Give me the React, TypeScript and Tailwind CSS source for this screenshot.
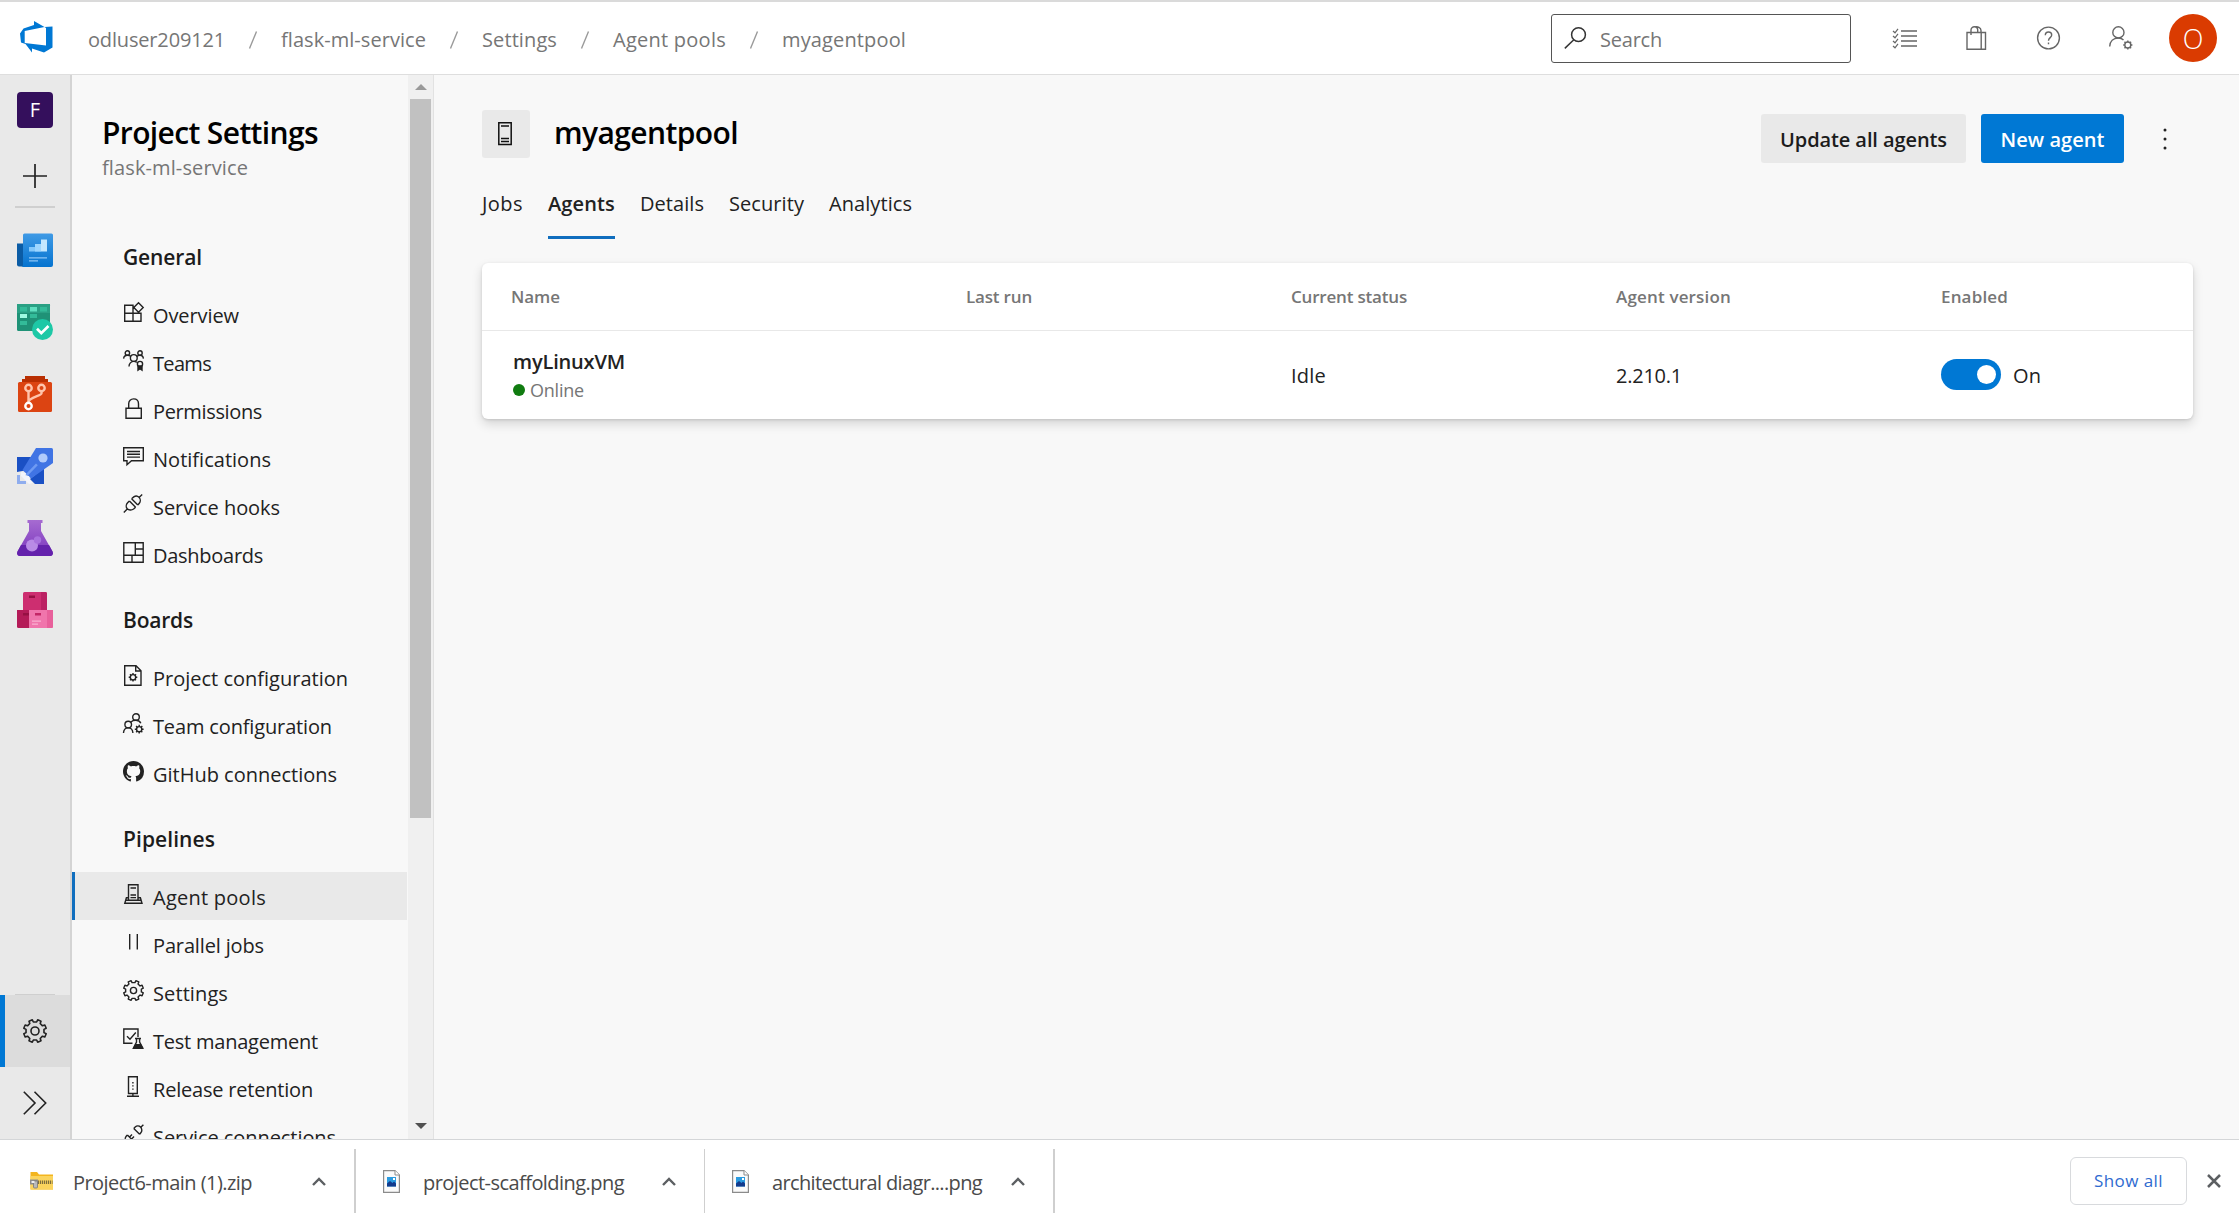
import { ReactNode, useLayoutEffect, useRef } from "react";

/* Text whose tracking is adjusted so that the run takes a given width. */
function Fit({ w, className = "", children }: { w: number; className?: string; children: string }) {
  const ref = useRef<HTMLSpanElement>(null);
  useLayoutEffect(() => {
    const el = ref.current!;
    el.style.letterSpacing = "0px";
    const natural = el.getBoundingClientRect().width;
    el.style.letterSpacing = `${(w - natural) / children.length}px`;
  }, [w, children]);
  return (
    <span ref={ref} className={`inline-block w-max shrink-0 whitespace-pre ${className}`}>
      {children}
    </span>
  );
}

function gearPath(c: number, teeth: number, r1: number, r2: number) {
  const pts: string[] = [];
  for (let i = 0; i < teeth; i++) {
    const step = (Math.PI * 2) / teeth;
    const a = i * step - step / 2;
    [
      [a - step * 0.27, r1],
      [a - step * 0.2, r2],
      [a + step * 0.2, r2],
      [a + step * 0.27, r1],
    ].forEach(([t, r]) => pts.push(`${(c + r * Math.cos(t)).toFixed(2)} ${(c + r * Math.sin(t)).toFixed(2)}`));
  }
  return `M${pts.join("L")}Z`;
}

function Ico({ s = 21, sw = 1.4, className = "", children }: { s?: number; sw?: number; className?: string; children: ReactNode }) {
  return (
    <svg
      width={s}
      height={s}
      viewBox={`0 0 ${s} ${s}`}
      fill="none"
      stroke="currentColor"
      strokeWidth={sw}
      className={`block shrink-0 overflow-visible ${className}`}
    >
      {children}
    </svg>
  );
}

const Gear = ({ s, sw = 1.4, r }: { s: number; sw?: number; r: number }) => (
  <Ico s={s} sw={sw}>
    <path d={gearPath(s / 2, 8, s * 0.38, s * 0.48)} strokeLinejoin="round" />
    <circle cx={s / 2} cy={s / 2} r={r} />
  </Ico>
);

const icons: Record<string, ReactNode> = {
  overview: (
    <Ico>
      <path d="M1.7 3.2H10V19.3H1.7ZM1.7 11.3H18V19.3H1.7M10 11.3V19.3M15.5 .8L20.2 5.5L15.5 10.2L10.8 5.5Z" />
    </Ico>
  ),
  teams: (
    <Ico>
      <circle cx="4.4" cy="3" r="2.2" />
      <circle cx="17" cy="3" r="2.2" />
      <circle cx="10.8" cy="8" r="3.4" />
      <path d="M.6 8.6C.8 6.4 2.4 5.2 4.4 5.2S7.4 6 8 6.6M20.4 8.6C20.2 6.4 19 5.2 17 5.2S14.2 6 13.6 6.6M6 16.5C6 13.6 8 11.4 10.8 11.4C12 11.4 13 11.8 13.8 12.4" />
      <circle cx="17" cy="14" r="2.6" />
      <path d="M15 16V20.2L17 18.8L19 20.2V16Z" fill="currentColor" />
    </Ico>
  ),
  lock: (
    <Ico>
      <path d="M3 10.3H18.3V20.3H3ZM5.7 10.3V5.8C5.7 2.8 7.8.9 10.6.9S15.5 2.8 15.5 5.8V10.3" />
    </Ico>
  ),
  note: (
    <Ico>
      <path d="M.7 1.7H20.3V14.8H8.5L4 18.8V14.8H.7ZM4 5.5H17M4 8.3H17M4 11.1H17" />
    </Ico>
  ),
  hook: (
    <Ico sw={1.4}>
      <path d="M.8 18.5L4 15.3M15.8 3.7L19.2 .6M8.6 4.8L14.8 11M6.4 7L12.6 13.200M8.600 4.800L10.800 2.900C12.600 1.500 14.700 1.900 16 3.200S17.900 7.200 16.300 9.300L14.800 11M6.400 7L4.600 8.800C3 10.500 2.800 13.200 4.200 14.700S8.600 16.500 10.600 15L12.600 13.200" />
    </Ico>
  ),
  dash: (
    <Ico>
      <path d="M.8 .8H20.2V20.2H.8ZM.8 13.3H20.2M12.3 .8V13.3M12.3 7H20.2M9 13.3V20.2" />
    </Ico>
  ),
  projcfg: (
    <Ico>
      <path d="M1.7 .7H13L18 5.7V20.3H1.7ZM12.7 .7V6H18" />
      <circle cx="10" cy="12.3" r="2.7" />
      <path d="M10 8V9.6M10 15V16.6M5.7 12.3H7.3M12.7 12.3H14.3M7 9.3L8.1 10.4M11.9 14.2L13 15.3M13 9.3L11.9 10.4M8.1 14.2L7 15.3" />
    </Ico>
  ),
  teamcfg: (
    <Ico>
      <circle cx="13" cy="4" r="3.3" />
      <circle cx="5.2" cy="11.6" r="3.3" />
      <path d="M.5 20C.7 16.8 2.6 14.9 5.2 14.9S9.7 16.8 9.9 20M8 8.9C9.2 7.8 11 7.2 13 7.3C15.5 7.4 17.2 8.7 17.8 10.3" />
      <circle cx="16.2" cy="16.2" r="2.6" />
      <path d="M16.2 11.8V13.6M16.2 18.8V20.6M11.8 16.2H13.6M18.8 16.2H20.6M13.1 13.1L14.3 14.3M18.1 18.1L19.3 19.3M19.3 13.1L18.1 14.3M14.3 18.1L13.1 19.3" />
    </Ico>
  ),
  github: (
    <svg width="21" height="21" viewBox="0 0 16 16" fill="currentColor" className="block shrink-0">
      <path d="M8 0C3.58 0 0 3.58 0 8c0 3.54 2.29 6.53 5.47 7.59.4.07.55-.17.55-.38 0-.19-.01-.82-.01-1.49-2.01.37-2.53-.49-2.69-.94-.09-.23-.48-.94-.82-1.13-.28-.15-.68-.52-.01-.53.63-.01 1.08.58 1.23.82.72 1.21 1.87.87 2.33.66.07-.52.28-.87.51-1.07-1.78-.2-3.64-.89-3.64-3.95 0-.87.31-1.59.82-2.15-.08-.2-.36-1.02.08-2.12 0 0 .67-.21 2.2.82.64-.18 1.32-.27 2-.27s1.36.09 2 .27c1.53-1.04 2.2-.82 2.2-.82.44 1.1.16 1.92.08 2.12.51.56.82 1.27.82 2.15 0 3.07-1.87 3.75-3.65 3.95.29.25.54.73.54 1.48 0 1.07-.01 1.93-.01 2.2 0 .21.15.46.55.38A8.01 8.01 0 0 0 16 8c0-4.42-3.58-8-8-8Z" />
    </svg>
  ),
  pool: (
    <Ico>
      <path d="M5.5 15.6V.8H15V15.6M5.5 13.8H3.4L1.8 19.3H19L17.4 13.8H15M3 16.2H17.6M7.5 4H13M7.5 11H13M7.5 13.6H13" />
    </Ico>
  ),
  parallel: (
    <Ico>
      <path d="M6.7 2V17.5M14.3 2V17.5" />
    </Ico>
  ),
  gear: <Gear s={21} r={3.1} />,
  test: (
    <Ico>
      <path d="M9.5 15.3H.8V1H15V9M4 8.2L7 11.3L12.8 4.5M12 10.5H18M13.5 10.5V14L10.5 20H19.8L16.6 14V10.5" />
      <path d="M12.6 16.6H17.6L19.4 20.2H10.6Z" fill="currentColor" />
    </Ico>
  ),
  release: (
    <Ico>
      <path d="M5.5 .8H14.3V17.5H5.5ZM9.9 17.5V20.2M4 20.3H16" />
      <path d="M9.9 6V14.5" strokeDasharray="1.4 1.8" />
    </Ico>
  ),
  plug: (
    <Ico>
      <path d="M20.4 .7L17.8 3.3M10.8 4.4L16.6 10.2M10.8 4.4L12.2 3C13.8 1.6 16.2 1.8 17.5 3.1S19.4 7 18 8.5L16.6 10.2M.8 20.2L3.4 17.6M4.4 11L10.2 16.8M4.4 11L3.2 12.3C1.8 14 2 16.4 3.4 17.7M6.6 13L9 10.6M8.6 15L11 12.6" />
    </Ico>
  ),
};

type Row = [icon: string, label: string, width: number];
const groups: { title: string; w: number; rows: Row[] }[] = [
  {
    title: "General",
    w: 79,
    rows: [
      ["overview", "Overview", 86],
      ["teams", "Teams", 58],
      ["lock", "Permissions", 109],
      ["note", "Notifications", 118],
      ["hook", "Service hooks", 127],
      ["dash", "Dashboards", 110],
    ],
  },
  {
    title: "Boards",
    w: 70,
    rows: [
      ["projcfg", "Project configuration", 195],
      ["teamcfg", "Team configuration", 179],
      ["github", "GitHub connections", 184],
    ],
  },
  {
    title: "Pipelines",
    w: 92,
    rows: [
      ["pool", "Agent pools", 113],
      ["parallel", "Parallel jobs", 111],
      ["gear", "Settings", 75],
      ["test", "Test management", 165],
      ["release", "Release retention", 160],
      ["plug", "Service connections", 183],
    ],
  },
];

const crumbs: [string, number][] = [
  ["odluser209121", 137],
  ["flask-ml-service", 145],
  ["Settings", 75],
  ["Agent pools", 113],
  ["myagentpool", 124],
];

function Header() {
  return (
    <header className="flex h-[75px] shrink-0 items-center border-t-2 border-b border-t-[#dadada] border-b-[#dedede] bg-white pr-[22px] pl-[19px]">
      <svg width="36" height="36" viewBox="0 0 36 36" className="mb-px block shrink-0" fill="#0078d4">
        <path fillRule="evenodd" d="M1 13.5L4.5 8.5L15 5V1L25.5 7L33.5 6.5V27.5L25 32.5L13 28.5V32.5L6.5 24L2 22.5ZM25.5 7L5.7 11V23L27 25.5V8Z" />
      </svg>
      <nav className="ml-[33px] flex items-center pt-[3px] text-[20px] leading-[30px] text-[#767676]">
        {crumbs.map(([label, w], i) => (
          <div key={label} className="flex items-center">
            {i > 0 && (
              <svg width="56" height="20" viewBox="0 0 56 20" stroke="#9a9a9a" strokeWidth="1.4" className="block">
                <path d="M24.5 18.500L31.500 1.500" />
              </svg>
            )}
            <Fit w={w}>{label}</Fit>
          </div>
        ))}
      </nav>
      <div className="ml-auto flex items-center text-[#666]">
        <div className="flex h-[49px] w-[300px] items-center rounded-[3px] border border-[#555] pl-[12px]">
          <Ico s={22} sw={1.5} className="text-[#333]">
            <circle cx="14.5" cy="7.7" r="6.9" />
            <path d="M9.8 12.8L.8 21.4" />
          </Ico>
          <Fit w={62} className="ml-[14px] pt-[3px] text-[20px] leading-[30px] text-[#767676]">
            Search
          </Fit>
        </div>
        <div className="ml-[42px] flex gap-[48px]">
          <Ico s={24} sw={1.5}>
            <path d="M8 5H24M8 10H24M8 15H24M8 20H24" />
            <path d="M0 5L2 6.8L5 2.8M0 10L2 11.8L5 7.8M0 15L2 16.8L5 12.8M0 20L2 21.8L5 17.8" strokeWidth="1.2" />
          </Ico>
          <Ico s={24} sw={1.4}>
            <path d="M2 6.500H20.500V23.3H2ZM16.200 6.500V23.3M6 9V4C6 2 7.500.8 9.400.8S12.700 2 12.700 4V6.500M10 1C12.500 .2 16 1.4 16 4.4V6.500" />
          </Ico>
          <Ico s={24} sw={1.4}>
            <circle cx="11.500" cy="12" r="10.900" />
            <path d="M8.300 9.300C8.300 7.200 9.700 6 11.500 6S14.700 7.200 14.700 9C14.700 11.500 11.500 11.800 11.500 14.700M11.500 16.500V18.300" />
          </Ico>
          <Ico s={24} sw={1.4}>
            <circle cx="9.4" cy="6.4" r="5.6" />
            <path d="M.7 20.5C.9 15.3 4.3 12 9.4 12C11.8 12 13.3 12.8 14.5 14" />
            <circle cx="18.8" cy="19" r="3" />
            <path d="M18.8 14.4V16M18.8 22V23.6M14.2 19H15.8M21.8 19H23.4M15.5 15.7L16.7 16.9M20.9 21.1L22.1 22.3M22.1 15.7L20.9 16.9M16.7 21.1L15.5 22.3" />
          </Ico>
        </div>
        <div className="ml-[36px] flex size-12 items-center justify-center rounded-full bg-[#da3b01] text-[27px] leading-none font-light text-white">O</div>
      </div>
    </header>
  );
}

const railIcons: ReactNode[] = [
  <svg viewBox="0 0 36 36" className="size-9">
    <defs>
      <linearGradient id="ov" x2="0" y2="1">
        <stop stopColor="#3f9ae5" />
        <stop offset="1" stopColor="#0573cf" />
      </linearGradient>
    </defs>
    <path d="M0 11.5h9v23H2a2 2 0 0 1-2-2Z" fill="#0b5ca5" />
    <path d="M6 3a1.500 1.500 0 0 1 1.500-1.500H34.500A1.500 1.500 0 0 1 36 3V33a2 2 0 0 1-2 2H4.500A2 2 0 0 0 6 33Z" fill="url(#ov)" />
    <path d="M12 15h6v-3h6v7.500H12Z" fill="#83c8fb" />
    <path d="M18 12h6v7.500h-6Z" fill="#9dd6ff" />
    <path d="M24 7.500h6v12h-6Z" fill="#c3e7ff" />
    <path d="M12 25.300h18v1.200H12ZM12 28.300h9v1.200h-9Z" fill="#8cc5f5" />
  </svg>,
  <svg viewBox="0 0 36 36" className="size-9">
    <rect width="33" height="27" rx="1.500" fill="#1f9277" />
    <path d="M0 0h33v9H0Z" fill="#2aa084" />
    <path d="M3 3h7v4.500H3ZM23 3h7v4.500h-7ZM13 10h7v4H13ZM3 17h7v4H3Z" fill="#33bb99" />
    <path d="M13 3h7v4.500h-7Z" fill="#5fe0c0" />
    <path d="M3 10h7v4H3Z" fill="#9ffbe2" />
    <circle cx="25.500" cy="25.500" r="10.500" fill="#1dc8a6" />
    <path d="M20 24.800l4.300 4.300L31.500 22" stroke="#fff" strokeWidth="2.700" fill="none" />
  </svg>,
  <svg viewBox="0 0 36 36" className="size-9">
    <path d="M8 0h20v3h3v4H5V3h3Z" fill="#b92f02" />
    <rect x="1" y="6" width="34" height="30" rx="1.500" fill="#dc4412" />
    <g fill="none" stroke="#ffc4ab" strokeWidth="2.400">
      <path d="M11.500 15v12M24.500 15v2.500c0 2-13 4-13 8.500" />
      <circle cx="11.500" cy="12" r="3.200" />
      <circle cx="24.500" cy="12" r="3.200" />
      <circle cx="11.500" cy="30" r="3.200" fill="#dc4412" stroke="#fff" />
    </g>
  </svg>,
  <svg viewBox="0 0 36 36" className="size-9">
    <path d="M0 9h15L8 22.500 0 24ZM27 20v16H18l-5-5Z" fill="#1a50c4" />
    <path d="M19 0h15.500A1.500 1.500 0 0 1 36 1.500V15L14 30.500 5.500 22Z" fill="#4074e4" />
    <circle cx="26" cy="10" r="4.600" fill="#b1cbfb" />
    <path d="M8.500 26.500L19 15.500l1.800 1.800L10.300 28Z" fill="#6f9bf3" />
    <path d="M4 24l5 1-1 3 4 0 1 4 3 3-4 1L4 28Z" fill="#f2f4fb" />
    <path d="M0 27h3v6h6v3H0Z" fill="#8fadee" />
  </svg>,
  <svg viewBox="0 0 36 36" className="size-9">
    <defs>
      <linearGradient id="fl" x2="0" y2="1">
        <stop stopColor="#a66bd1" />
        <stop offset="1" stopColor="#7a35bd" />
      </linearGradient>
    </defs>
    <path d="M10.500 0h15v3H24v8L35.500 31.500c1 2.500 0 4.500-2.500 4.500H3C.5 36-.5 34 .5 31.500L12 11V3h-1.500Z" fill="url(#fl)" />
    <path d="M4 25H32l3.500 6.500c1 2.500 0 4.500-2.500 4.500H3C.5 36-.5 34 .5 31.500Z" fill="#6422ac" />
    <circle cx="15" cy="25.500" r="6" fill="#b98be6" />
    <circle cx="20.500" cy="20" r="3.700" fill="#a872dd" />
  </svg>,
  <svg viewBox="0 0 36 36" className="size-9">
    <path d="M6 1.500A1.500 1.500 0 0 1 7.500 0h21A1.500 1.500 0 0 1 30 1.500V18H6Z" fill="#cd2e70" />
    <path d="M24 0h4.500A1.500 1.500 0 0 1 30 1.500V18h-6Z" fill="#bb2263" />
    <path d="M0 18h12v18H1.500A1.500 1.500 0 0 1 0 34.500Z" fill="#b41b58" />
    <path d="M12 18h24v16.500a1.500 1.500 0 0 1-1.500 1.500H12Z" fill="#f075ac" />
    <path d="M30 18h6v16.500a1.500 1.500 0 0 1-1.500 1.500H30Z" fill="#e8609b" />
    <path d="M12 3.500h6V6h-6ZM6 21h6v2.500H6Z" fill="#961043" />
    <path d="M18 21h6v2.500h-6Z" fill="#c32766" />
    <path d="M15 28.500h9v1.200h-9ZM15 31.500h6v1.200h-6Z" fill="#f9b0d0" />
  </svg>,
];

function Rail() {
  return (
    <aside className="flex w-[72px] shrink-0 flex-col border-r-2 border-[#d4d4d4] bg-[#e9e9e9] text-[#222]">
      <div className="flex h-[72px] shrink-0 items-center justify-center pb-[2px]">
        <div className="flex size-9 items-center justify-center rounded-[4px] bg-[#340f5c] text-[20px] leading-none text-white">F</div>
      </div>
      <div className="flex h-[59px] shrink-0 items-center justify-center pb-px">
        <Ico s={24} sw={1.7}>
          <path d="M12 0V24M0 12H24" />
        </Ico>
      </div>
      <div className="mx-[15px] mb-[6px] h-[2px] shrink-0 bg-[#cfcfcf]" />
      {railIcons.map((icon, i) => (
        <div key={i} className="flex h-[72px] shrink-0 items-center justify-center">
          {icon}
        </div>
      ))}
      <div className="mx-[15px] mt-auto h-px bg-[#cfcfcf]" />
      <div className="flex h-[72px] items-center justify-center border-l-[5px] border-[#0078d4] bg-[#dcdcdc] pr-[5px]">
        <Gear s={24} sw={1.6} r={4} />
      </div>
      <div className="flex h-[72px] items-center justify-center">
        <Ico s={24} sw={1.6}>
          <path d="M.8 .8L12 12L.8 23.200M11.500 .8L22.700 12L11.500 23.200" />
        </Ico>
      </div>
    </aside>
  );
}

function Sidebar() {
  return (
    <section className="flex w-[362px] shrink-0 border-r border-[#e2e2e2]">
      <div className="flex w-[336px] shrink-0 flex-col overflow-hidden">
        <div className="flex h-[140px] shrink-0 flex-col pt-[35px] pl-[30px]">
          <Fit w={216} className="text-[30px] leading-[46px] font-semibold text-black">
            Project Settings
          </Fit>
          <Fit w={146} className="text-[20px] leading-[24px] text-[#767676]">
            flask-ml-service
          </Fit>
        </div>
        {groups.map((g) => (
          <div key={g.title} className="shrink-0">
            <h3 className="flex h-[75px] pt-[26px] pl-[51px] text-[21px] leading-[32px] font-semibold text-[#1c1c1c]">
              <Fit w={g.w}>{g.title}</Fit>
            </h3>
            {g.rows.map(([icon, label, w]) => (
              <div
                key={label}
                className={
                  label === "Agent pools"
                    ? "mr-px flex h-12 items-center border-l-[3px] border-[#106ebe] bg-[#e9e9e9] pl-[48px] text-[#222]"
                    : "flex h-12 items-center pl-[51px] text-[#222]"
                }
              >
                <div className="mr-[9px] mb-[3px]">{icons[icon]}</div>
                <Fit w={w} className="pt-[3px] text-[20px] leading-[30px]">
                  {label}
                </Fit>
              </div>
            ))}
          </div>
        ))}
      </div>
      <div className="flex w-[25px] shrink-0 flex-col items-center bg-[#f0f0f0] pt-[9px] pb-[10px]">
        <svg width="12" height="6" viewBox="0 0 12 6" className="block" fill="#999">
          <path d="M0 6L6 0L12 6Z" />
        </svg>
        <div className="mt-[9px] h-[719px] w-[21px] bg-[#c1c1c1]" />
        <svg width="12" height="6" viewBox="0 0 12 6" className="mt-auto block" fill="#505050">
          <path d="M0 0L6 6L12 0Z" />
        </svg>
      </div>
    </section>
  );
}

const tabs: [string, number][] = [
  ["Jobs", 41],
  ["Agents", 67],
  ["Details", 64],
  ["Security", 75],
  ["Analytics", 83],
];

const grid = "grid grid-cols-[455px_325px_325px_325px_1fr] pl-[29px]";

function Main() {
  return (
    <main className="flex min-w-0 flex-1 flex-col pr-[46px] pl-[48px]">
      <div className="flex h-[83px] items-start pt-[35px]">
        <div className="flex size-12 items-center justify-center rounded-[3px] bg-[#e9e9e9] text-[#111]">
          <svg width="14" height="24" viewBox="0 0 14 24" fill="none" stroke="currentColor" strokeWidth="1.500" className="mr-[2px] block">
            <path d="M.8 .8H13.200V22.600H.8ZM3 4H11M3 16.500H11M3 19.500H11" />
          </svg>
        </div>
        <Fit w={184} className="ml-[24px] text-[30px] leading-[46px] font-semibold text-black">
          myagentpool
        </Fit>
        <div className="mt-[4px] ml-auto flex h-[49px] items-center text-[20px] leading-[30px] font-semibold">
          <div className="flex h-full w-[205px] items-center justify-center rounded-[3px] bg-[#e9e9e9] pt-[3px] text-[#1c1c1c]">
            <Fit w={167}>Update all agents</Fit>
          </div>
          <div className="ml-[15px] flex h-full w-[143px] items-center justify-center rounded-[3px] bg-[#0078d4] pt-[3px] text-white">
            <Fit w={104}>New agent</Fit>
          </div>
          <svg width="4" height="22" viewBox="0 0 4 22" className="mr-[26px] ml-[39px] block" fill="#222">
            <circle cx="2" cy="2" r="1.500" />
            <circle cx="2" cy="11" r="1.500" />
            <circle cx="2" cy="20" r="1.500" />
          </svg>
        </div>
      </div>
      <div className="mt-[24px] flex h-[57px] gap-[25px] text-[20px] leading-[44px] text-[#222]">
        {tabs.map(([t, w]) => (
          <div key={t} className={t === "Agents" ? "h-[57px] border-b-[3px] border-[#106ebe] font-semibold" : "h-[57px]"}>
            <Fit w={w}>{t}</Fit>
          </div>
        ))}
      </div>
      <div className="mt-[24px] h-[156px] rounded-[6px] bg-white shadow-[0_5px_11px_rgba(0,0,0,0.14),0_1px_3px_rgba(0,0,0,0.12)]">
        <div className={`${grid} h-[68px] items-center border-b border-[#e8e8e8] text-[17px] leading-[24px] font-semibold text-[#767676]`}>
          <Fit w={49}>Name</Fit>
          <Fit w={66}>Last run</Fit>
          <Fit w={116}>Current status</Fit>
          <Fit w={115}>Agent version</Fit>
          <Fit w={67}>Enabled</Fit>
        </div>
        <div className={`${grid} h-[88px] items-center text-[20px] text-[#222]`}>
          <div className="flex flex-col items-start pl-[2px]">
            <Fit w={112} className="leading-[30px] font-semibold">
              myLinuxVM
            </Fit>
            <div className="flex items-center">
              <div className="mr-[5px] size-3 rounded-full bg-[#107c10]" />
              <Fit w={54} className="text-[18px] leading-[26px] text-[#767676]">
                Online
              </Fit>
            </div>
          </div>
          <div />
          <div className="pt-[2px]">
            <Fit w={35}>Idle</Fit>
          </div>
          <div className="pt-[2px]">
            <Fit w={66}>2.210.1</Fit>
          </div>
          <div className="flex items-center">
            <div className="mb-px flex h-[31px] w-[60px] items-center justify-end rounded-full bg-[#0078d4] pr-[5px]">
              <div className="size-[19px] rounded-full bg-white" />
            </div>
            <Fit w={28} className="ml-[12px] pt-[2px]">
              On
            </Fit>
          </div>
        </div>
      </div>
    </main>
  );
}

const PngIcon = () => (
  <svg width="17" height="23" viewBox="0 0 17 23" className="block shrink-0">
    <path d="M.6 .6H12L16.400 5V22.400H.6Z" fill="#fafafa" stroke="#8b8b8b" strokeWidth="1.200" />
    <path d="M12 .6V5H16.400" fill="#fff" stroke="#8b8b8b" />
    <rect x="4" y="7" width="9" height="9.500" fill="#2b9be0" />
    <path d="M4 13.500L7 11L9.500 13L11 11.500L13 13.500V16.500H4Z" fill="#123a8c" />
    <rect x="10" y="8" width="2" height="2" fill="#fff" />
  </svg>
);

const ZipIcon = () => (
  <svg width="23" height="18" viewBox="0 0 23 18" className="mb-px block shrink-0">
    <path d="M.5 0H7L9 2.500H23V17.500H.5Z" fill="#f3b51f" />
    <path d="M.5 4H23V17.500H.5Z" fill="#fbd45d" />
    <path d="M8 10.300H22.500" stroke="#7d6d3c" strokeWidth="3.600" strokeDasharray="1.200 .8" />
    <rect x="0" y="7.500" width="8" height="5" fill="#8d8d8d" />
    <rect x="3.500" y="9" width="4" height="7" rx="1" fill="#b9b9b9" stroke="#777" strokeWidth=".8" />
    <rect x="1.500" y="9" width="3" height="2" fill="#eee" />
  </svg>
);

const Chevron = () => (
  <svg width="14" height="9" viewBox="0 0 14 9" fill="none" stroke="#5c5f62" strokeWidth="2.400" className="block shrink-0">
    <path d="M1 8L7 2L13 8" />
  </svg>
);

function Shelf() {
  return (
    <footer className="flex h-[74px] shrink-0 items-end border-t border-[#d4d6d8] bg-white text-[20px] leading-[30px] text-[#4a4a4a]">
      <div className="flex h-[64px] w-[356px] items-center border-r-2 border-[#cfcfcf] pr-[28px] pl-[30px]">
        <ZipIcon />
        <Fit w={179} className="mr-auto ml-[20px] pt-[3px]">
          Project6-main (1).zip
        </Fit>
        <Chevron />
      </div>
      <div className="flex h-[64px] w-[349px] items-center border-r border-[#cfcfcf] pr-[28px] pl-[27px]">
        <PngIcon />
        <Fit w={201} className="mr-auto ml-[23px] pt-[3px]">
          project-scaffolding.png
        </Fit>
        <Chevron />
      </div>
      <div className="flex h-[64px] w-[350px] items-center border-r-2 border-[#cfcfcf] pr-[28px] pl-[27px]">
        <PngIcon />
        <Fit w={210} className="mr-auto ml-[23px] pt-[3px]">
          architectural diagr....png
        </Fit>
        <Chevron />
      </div>
      <div className="mb-[8px] ml-auto flex items-center">
        <div className="flex h-[48px] w-[117px] items-center justify-center rounded-[6px] border border-[#d8dadd] text-[17px] font-medium text-[#2f6bd0]">
          <Fit w={69}>Show all</Fit>
        </div>
        <svg width="14" height="14" viewBox="0 0 14 14" stroke="#5c5f62" strokeWidth="2.500" className="mr-[18px] ml-[20px] block">
          <path d="M1 1L13 13M13 1L1 13" />
        </svg>
      </div>
    </footer>
  );
}

export default function App() {
  return (
    <div className="flex h-[1213px] w-[2239px] flex-col overflow-hidden bg-[#f8f8f8] font-['Open_Sans','Noto_Sans',sans-serif]">
      <Header />
      <div className="flex min-h-0 flex-1">
        <Rail />
        <Sidebar />
        <Main />
      </div>
      <Shelf />
    </div>
  );
}
